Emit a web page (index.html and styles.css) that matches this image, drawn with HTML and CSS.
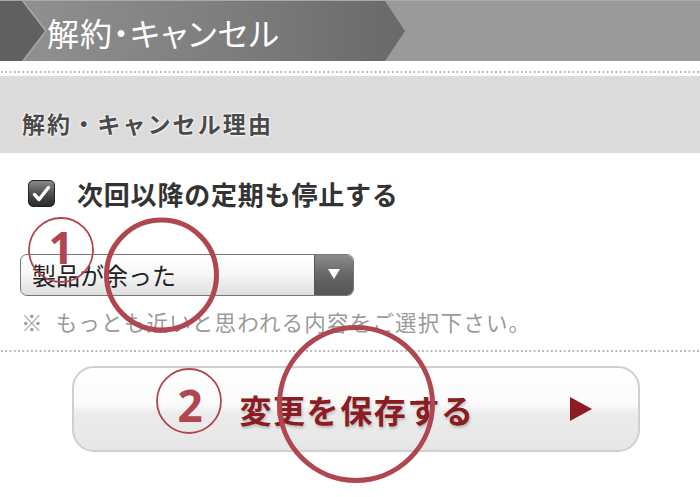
FILE: index.html
```html
<!DOCTYPE html>
<html lang="ja">
<head>
<meta charset="utf-8">
<title>解約・キャンセル</title>
<link rel="stylesheet" href="styles.css">
</head>
<body>
<div class="page">
  <header class="header">
    <div class="ribbon"><h1 class="title">解約・キャンセル</h1></div>
  </header>
  <div class="dots dots-top"></div>
  <div class="band"><h2 class="band-title">解約・キャンセル理由</h2></div>
  <div class="form-area">
    <label class="check-row">
      <span class="checkbox">
        <svg width="27" height="27" viewBox="0 0 27 27"><path d="M6.5 14.5 L11 19.5 L20.5 7.5" fill="none" stroke="#fff" stroke-width="3.4" stroke-linecap="round" stroke-linejoin="round"/></svg>
      </span>
      <span class="check-label">次回以降の定期も停止する</span>
    </label>
    <div class="select">
      <span class="select-value">製品が余った</span>
      <span class="select-arrow"><svg width="12" height="10" viewBox="0 0 12 10"><path d="M0 0 H12 L6 10 Z" fill="#fff"/></svg></span>
    </div>
    <p class="note">※&ensp;もっとも近いと思われる内容をご選択下さい。</p>
  </div>
  <div class="dots dots-bottom"></div>
  <div class="button-area">
    <button class="save-btn" type="button">
      <span class="save-text">変更を保存する</span>
      <span class="save-arrow"><svg width="22" height="24" viewBox="0 0 22 24"><path d="M0 0 L22 12 L0 24 Z" fill="#8a1c22"/></svg></span>
    </button>
  </div>
  <svg class="annot" width="700" height="497" viewBox="0 0 700 497">
    <g fill="none" stroke="#b0464f">
      <circle cx="61" cy="250" r="32" stroke-width="1.8"/>
      <circle cx="189" cy="401" r="32" stroke-width="1.8"/>
      <circle cx="161.5" cy="275" r="55" stroke-width="5"/>
      <circle cx="356" cy="404" r="76.5" stroke-width="5"/>
    </g>
    <text x="61" y="264" class="annot-num">1</text>
    <text x="190" y="422" class="annot-num">2</text>
  </svg>
</div>
</body>
</html>
```
FILE: styles.css
```css
* { box-sizing: border-box; }
html, body { margin: 0; padding: 0; background: #fff; }
body { font-family: "Noto Sans CJK JP", "Noto Sans", sans-serif; }
.page { position: relative; width: 700px; height: 497px; overflow: hidden; }

.header {
  height: 61px;
  background: #9a9a9a;
  border-top: 1px solid #a9a9a9;
}
.ribbon {
  position: relative;
  width: 405px;
  height: 100%;
  background: linear-gradient(90deg, #929292 0%, #7c7c7c 60%, #696969 100%);
  clip-path: polygon(0 0, 385px 0, 405px 50%, 385px 100%, 0 100%);
  display: flex;
  align-items: center;
  padding-left: 47px;
}
.ribbon::before {
  content: "";
  position: absolute;
  left: 0; top: 0; bottom: 0;
  width: 50px;
  background: #606060;
  clip-path: polygon(0 0, 22px 0, 45px 50%, 22px 100%, 0 100%);
}
.ribbon::after {
  content: "";
  position: absolute;
  left: 0; top: 0; bottom: 0;
  width: 50px;
  background: #a4a4a4;
  clip-path: polygon(22px 0, 24px 0, 47px 50%, 24px 100%, 22px 100%, 45px 50%);
}
.title {
  margin: 0;
  position: relative;
  color: #fff;
  font-size: 32px;
  font-weight: 400;
  font-feature-settings: "palt" 1;
  letter-spacing: 1px;
  line-height: 1;
  margin-top: 2px;
}

.dots {
  height: 2px;
  background: linear-gradient(90deg, #b4b4b4 2px, transparent 2px) 1px 0 / 4.3px 2px repeat-x;
}
.dots-top { margin-top: 10px; }

.band {
  margin-top: 3px;
  height: 77px;
  background: #dcdbdc;
  display: flex;
  align-items: center;
  padding: 17px 0 0 22px;
}
.band-title {
  margin: 0;
  font-size: 23px;
  font-weight: 700;
  letter-spacing: 2.1px;
  color: #4a4a4a;
  text-shadow: 0 0 2px #fff, 0 0 2px #fff, 0 0 3px #fff;
  line-height: 1;
}

.form-area { padding: 27px 0 0 20px; }
.check-row {
  display: flex;
  align-items: center;
  height: 27px;
  padding-left: 8px;
}
.checkbox {
  width: 27px;
  height: 27px;
  border-radius: 5px;
  background: linear-gradient(180deg, #8a8a8a 0%, #4a4a4a 55%, #2a2a2a 100%);
  border: 1px solid #222;
  display: flex;
  align-items: center;
  justify-content: center;
}
.checkbox svg { display: block; margin: -1px; }
.check-label {
  margin-left: 22px;
  font-size: 26px;
  font-weight: 700;
  color: #333;
  letter-spacing: 0.8px;
  line-height: 1;
}

.select {
  margin-top: 47px;
  width: 334px;
  height: 42px;
  border: 1.5px solid #777;
  border-radius: 7px;
  background: linear-gradient(180deg, #ffffff 0%, #f6f6f6 50%, #dedede 100%);
  display: flex;
  align-items: stretch;
  overflow: hidden;
}
.select-value {
  flex: 1;
  display: flex;
  align-items: center;
  padding-left: 11px;
  font-size: 24px;
  color: #222;
  line-height: 1;
}
.select-arrow {
  width: 39px;
  background: linear-gradient(180deg, #8c8c8c 0%, #666 50%, #555 100%);
  border-left: 1px solid #555;
  display: flex;
  align-items: center;
  justify-content: center;
}
.select-arrow svg { display: block; margin-top: -2px; }

.note {
  margin: 14px 0 0 1px;
  font-size: 21.5px;
  line-height: 24px;
  letter-spacing: 1.2px;
  color: #9a9a9a;
}

.dots-bottom { margin-top: 16px; }

.button-area { padding: 14px 0 0 72px; }
.save-btn {
  width: 568px;
  height: 86px;
  border: 2px solid #cfcfcf;
  border-radius: 22px;
  background: linear-gradient(180deg, #ffffff 0%, #fafafa 45%, #ececec 55%, #e6e6e6 100%);
  display: grid;
  grid-template-columns: 1fr auto 1fr;
  align-items: center;
  padding: 0;
  font-family: inherit;
  cursor: pointer;
}
.save-text {
  grid-column: 2;
  font-size: 32px;
  font-weight: 700;
  color: #8a1c22;
  letter-spacing: 1.6px;
  text-shadow: 1px 2px 3px rgba(0,0,0,0.22);
  line-height: 1;
  margin-left: 2px;
}
.save-arrow {
  grid-column: 3;
  justify-self: end;
  margin-right: 46px;
  display: flex;
}
.save-arrow svg { display: block; }

.annot {
  position: absolute;
  left: 0; top: 0;
  pointer-events: none;
}
.annot-num {
  font-family: "Noto Sans", "DejaVu Sans", sans-serif;
  font-weight: 700;
  font-size: 44px;
  fill: #b0464f;
  text-anchor: middle;
}
```
